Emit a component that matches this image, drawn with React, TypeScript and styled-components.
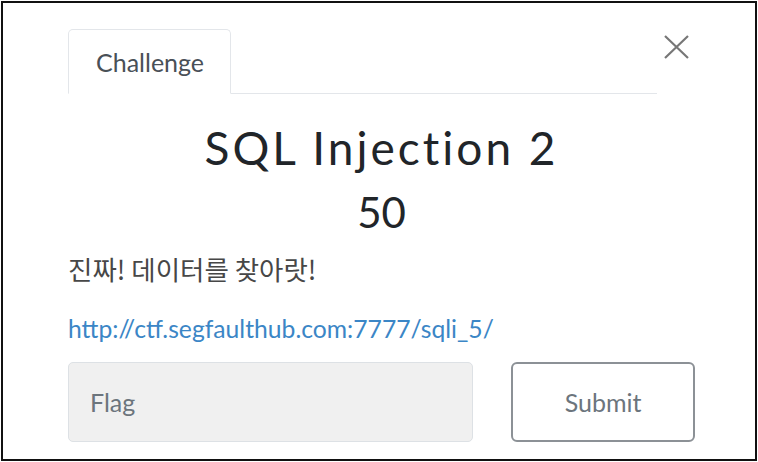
import React from "react";
import styled, { createGlobalStyle } from "styled-components";

const Global = createGlobalStyle`
  html, body { margin: 0; padding: 0; background: #ffffff; }
  body { font-family: Lato, "Noto Sans", "Noto Sans CJK KR", sans-serif; }
  * { box-sizing: border-box; }
`;

const Frame = styled.div`
  margin: 1px 0 0 1px;
  width: 756px;
  height: 460px;
  border: 2px solid #111;
  padding: 26px 0 0 65px;
  overflow: hidden;
`;

const Column = styled.div`
  width: 627px;
  display: flex;
  flex-direction: column;
`;

const Header = styled.div`
  display: flex;
  align-items: flex-start;
`;

const Nav = styled.div`
  flex: 1;
  display: flex;
  border-bottom: 1px solid #e3e6ea;
`;

const Tab = styled.div`
  height: 65px;
  margin-bottom: -1px;
  padding: 0 26px 0 27px;
  display: flex;
  align-items: center;
  border: 1px solid #e3e6ea;
  border-bottom-color: #ffffff;
  border-radius: 5px 5px 0 0;
  background: #fff;
  color: #495057;
  font-size: 25px;
`;

const Close = styled.button`
  width: 38px;
  height: 40px;
  padding: 6px 0 0;
  border: 0;
  background: none;
  display: flex;
  justify-content: center;
  align-items: flex-start;
  cursor: pointer;
`;

const Title = styled.h2`
  margin: 26px 0 0;
  text-align: center;
  font-weight: 400;
  font-size: 46px;
  line-height: 56px;
  letter-spacing: 3px;
  color: #212529;
`;

const Points = styled.h3`
  margin: 11px 0 0;
  text-align: center;
  font-weight: 400;
  font-size: 42px;
  line-height: 50px;
  color: #212529;
`;

const Description = styled.p`
  margin: 15px 0 0;
  font-family: "Noto Sans CJK KR", sans-serif;
  font-size: 26.5px;
  line-height: 34px;
  color: #474747;
`;

const Link = styled.a`
  margin-top: 28px;
  font-size: 24.7px;
  line-height: 30px;
  color: #3b86c6;
  text-decoration: none;
`;

const Form = styled.div`
  margin-top: 18px;
  display: flex;
  gap: 38px;
`;

const Input = styled.input`
  width: 406px;
  height: 80px;
  padding: 0 21px;
  border: 1px solid #dde1e5;
  border-radius: 5px;
  background: #f0f0f0;
  font-family: Lato, sans-serif;
  font-size: 25px;
  color: #495057;
  &::placeholder { color: #6c757d; }
`;

const Button = styled.button`
  width: 184px;
  height: 80px;
  border: 2px solid #8c9196;
  border-radius: 6px;
  background: #fff;
  font-family: Lato, sans-serif;
  font-size: 25px;
  color: #6c757d;
`;

export default function App() {
  return (
    <>
      <Global />
      <Frame>
        <Column>
          <Header>
            <Nav>
              <Tab>Challenge</Tab>
            </Nav>
            <Close aria-label="Close">
              <svg width="25" height="24" viewBox="0 0 25 24">
                <path d="M1 1 L24 23 M24 1 L1 23" stroke="#777" strokeWidth="2.2" fill="none" />
              </svg>
            </Close>
          </Header>
          <Title>SQL Injection 2</Title>
          <Points>50</Points>
          <Description>진짜! 데이터를 찾아랏!</Description>
          <Link href="#">http://ctf.segfaulthub.com:7777/sqli_5/</Link>
          <Form>
            <Input placeholder="Flag" />
            <Button>Submit</Button>
          </Form>
        </Column>
      </Frame>
    </>
  );
}
